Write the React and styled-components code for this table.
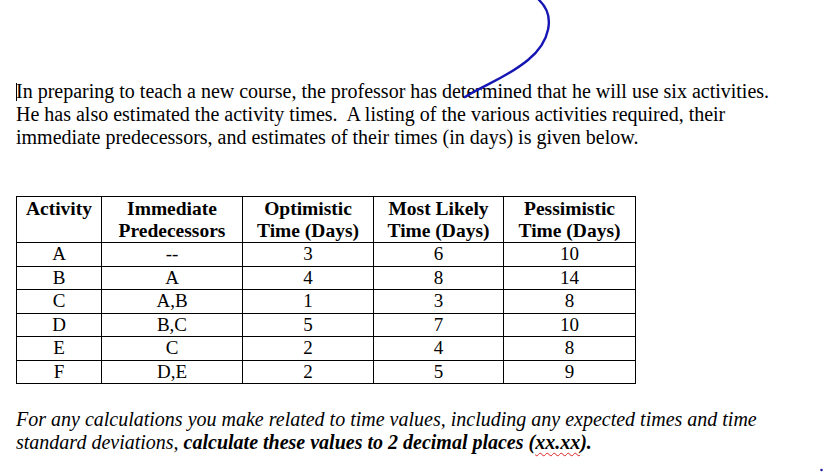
import React from "react";
import styled, { createGlobalStyle } from "styled-components";

const Global = createGlobalStyle`
  html, body { margin: 0; padding: 0; background: #fff; }
  body { font-family: "Liberation Serif", "Times New Roman", serif; color: #000; }
`;

const Page = styled.div`
  position: relative;
  width: 824px;
  height: 472px;
  overflow: hidden;
  padding: 80px 0 0 16px;
  box-sizing: border-box;
`;

const Para = styled.p`
  margin: 0;
  font-size: 20px;
  line-height: 23px;
  white-space: nowrap;
`;

const Cursor = styled.span`
  display: inline-block;
  width: 1px;
  height: 18px;
  background: #000;
  vertical-align: -3px;
  margin-right: -1px;
`;

const Table = styled.table`
  margin-top: 47px;
  border-collapse: collapse;
  font-size: 19px;
  text-align: center;
`;

const Th = styled.th`
  border: 1.5px solid #000;
  font-weight: bold;
  font-size: 19.5px;
  line-height: 22px;
  padding: 1px 2px 0;
  width: ${(p) => p.$w}px;
  box-sizing: border-box;
  vertical-align: top;
`;

const Td = styled.td`
  border: 1.5px solid #000;
  height: 22.5px;
  line-height: 22px;
  padding: 0;
`;

const Note = styled.p`
  margin: 24px 0 0;
  font-size: 20px;
  line-height: 23px;
  font-style: italic;
  white-space: nowrap;
`;

const Strong = styled.b`
  font-weight: bold;
`;

const Squiggle = styled.span`
  text-decoration: underline wavy #d22;
  text-decoration-thickness: 1px;
  text-underline-offset: 3px;
`;

const Overlay = styled.svg`
  position: absolute;
  left: 0;
  top: 0;
  pointer-events: none;
`;

const cols = [
  { w: 85, t: ["Activity"] },
  { w: 141, t: ["Immediate", "Predecessors"] },
  { w: 131, t: ["Optimistic", "Time (Days)"] },
  { w: 130, t: ["Most Likely", "Time (Days)"] },
  { w: 132, t: ["Pessimistic", "Time (Days)"] },
];

const rows = [
  ["A", "--", "3", "6", "10"],
  ["B", "A", "4", "8", "14"],
  ["C", "A,B", "1", "3", "8"],
  ["D", "B,C", "5", "7", "10"],
  ["E", "C", "2", "4", "8"],
  ["F", "D,E", "2", "5", "9"],
];

export default function App() {
  return (
    <>
      <Global />
      <Page>
        <Para>
          <Cursor />
          In preparing to teach a new course, the professor has determined that he will use six activities.
          <br />
          He has also estimated the activity times.&nbsp; A listing of the various activities required, their
          <br />
          immediate predecessors, and estimates of their times (in days) is given below.
        </Para>
        <Table>
          <thead>
            <tr>
              {cols.map((c, i) => (
                <Th key={i} $w={c.w}>
                  {c.t.map((l, j) => (
                    <div key={j}>{l}</div>
                  ))}
                </Th>
              ))}
            </tr>
          </thead>
          <tbody>
            {rows.map((r, i) => (
              <tr key={i}>
                {r.map((v, j) => (
                  <Td key={j}>{v}</Td>
                ))}
              </tr>
            ))}
          </tbody>
        </Table>
        <Note>
          For any calculations you make related to time values, including any expected times and time
          <br />
          standard deviations,{" "}
          <Strong>
            calculate these values to 2 decimal places (<Squiggle>xx.xx</Squiggle>).
          </Strong>
        </Note>
        <Overlay width="824" height="472" viewBox="0 0 824 472">
          <path
            d="M539 0 C556 16 550 42 528 60 S 486 84 465 97"
            fill="none"
            stroke="#1616b4"
            strokeWidth="2.4"
            strokeLinecap="round"
          />
          <circle cx="821.5" cy="470" r="1.3" fill="#2020a0" />
        </Overlay>
      </Page>
    </>
  );
}
